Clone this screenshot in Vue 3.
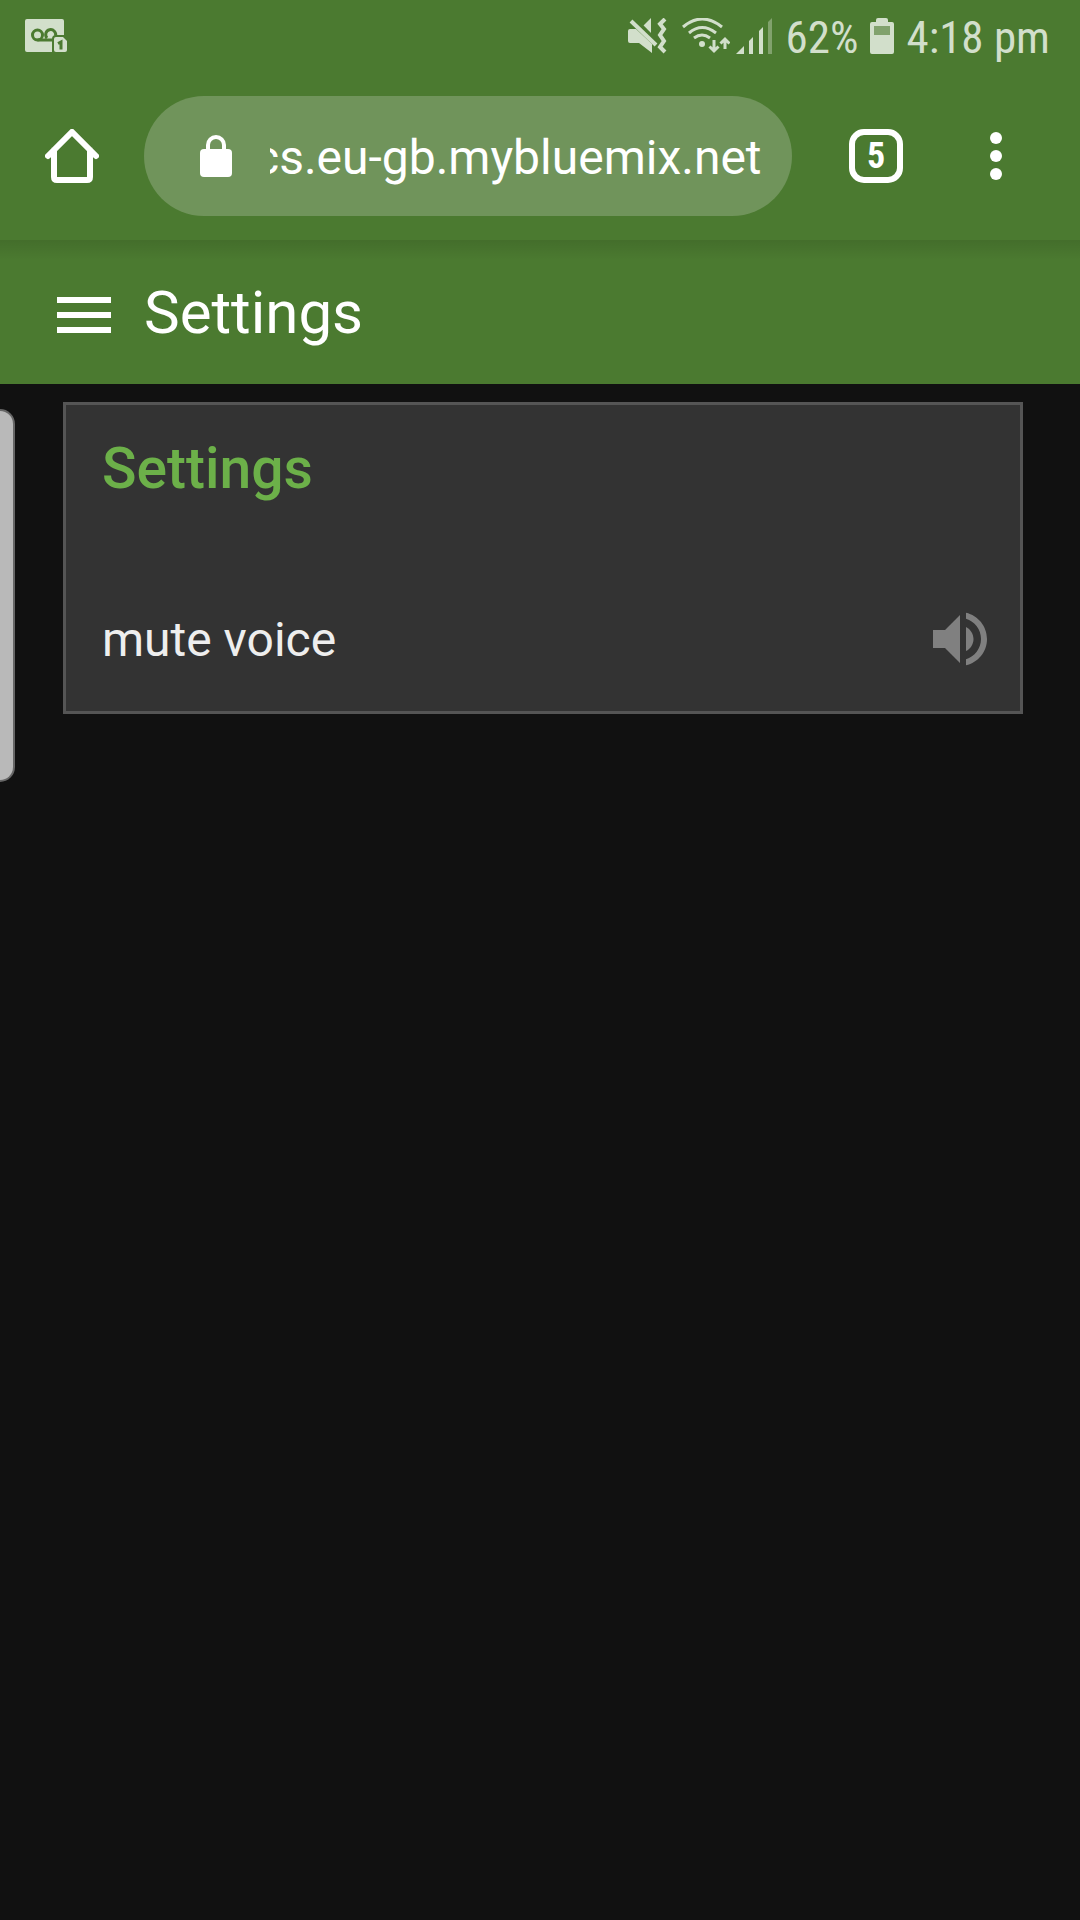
<script setup>
import { onMounted, ref } from 'vue'

const url = ref('cs.eu-gb.mybluemix.net')
const address = ref(null)
const openTabs = ref(5)
const muted = ref(false)

onMounted(() => {
  // keep the end of the host name in view
  address.value.scrollLeft = address.value.scrollWidth
})
</script>

<template>
  <div class="screen">
    <div class="status-bar">
      <svg class="voicemail" width="42" height="34" viewBox="0 0 42 34" aria-hidden="true">
        <path class="fill" d="M2 0H37Q39 0 39 2V16H31Q27 16 27 20V33H2Q0 33 0 31V2Q0 0 2 0Z" />
        <g class="cut">
          <circle cx="12.5" cy="16" r="5" />
          <path d="M12.5 21H27M22 19A5 5 0 1 1 30.5 17" />
        </g>
        <path class="fill" d="M29 20Q29 18 31 18H38L42 22V31Q42 33 40 33H31Q29 33 29 31Z" />
        <path class="one" d="M33 24.5L36 23V30.5" />
      </svg>
      <div class="status-right">
        <svg class="sound-off" width="40" height="36" viewBox="0 0 40 36" aria-hidden="true">
          <path class="fill" d="M2 11H8L24 26V35L11 25H2Q0 25 0 23V13Q0 11 2 11ZM15 8L23 0V17Z" />
          <path class="slash-gap" d="M6 0L31 25" />
          <path class="line thick" d="M3 3L28 27" />
          <path class="line thick" d="M37 1L32 6L36 11L32 17L36 23L32 29L37 34" />
        </svg>
        <svg class="wifi" width="48" height="36" viewBox="0 0 48 36" aria-hidden="true">
          <path class="line" d="M1 9Q20 -7 40 9M7 15Q20 4 34 15M12 20Q20 14 28 20" />
          <circle class="fill" cx="20" cy="26" r="3" />
          <path class="line" d="M32 22V33M27.5 28.5L32 33L36.5 28.5M43 31V21M38.5 25.5L43 21L47.5 25.5" />
        </svg>
        <svg class="signal" width="36" height="36" viewBox="0 0 36 36" aria-hidden="true">
          <path class="fill" d="M0 36L8 28V36ZM13 23L17 19V36H13ZM23 13L27 9V36H23Z" />
          <path class="fill dim" d="M32 4L36 0V36H32Z" />
        </svg>
        <span>62%</span>
        <svg class="battery" width="24" height="36" viewBox="0 0 24 36" aria-hidden="true">
          <path class="fill" fill-rule="evenodd" d="M6 4V2Q6 0 8 0H16Q18 0 18 2V4H22Q24 4 24 6V34Q24 36 22 36H2Q0 36 0 34V6Q0 4 2 4ZM4 8V17H20V8Z" />
          <path class="fill dim" d="M4 8H20V17H4Z" />
        </svg>
        <span>4:18 pm</span>
      </div>
    </div>

    <div class="browser-bar">
      <button class="home" type="button" aria-label="Home">
        <svg width="54" height="54" viewBox="0 0 54 54">
          <path d="M3 27L27 3L51 27M9 21V48Q9 51 12 51H42Q45 51 45 48V21" fill="none" stroke="#fff" stroke-width="6" stroke-linecap="round" />
        </svg>
      </button>
      <label class="address">
        <svg width="32" height="42" viewBox="0 0 32 42" aria-label="Secure">
          <path d="M8 16V10A8 8 0 0 1 24 10V16" fill="none" stroke="#fff" stroke-width="4" />
          <rect y="14" width="32" height="28" rx="4" fill="#fff" />
        </svg>
        <input ref="address" v-model="url" type="text" aria-label="Address" spellcheck="false">
      </label>
      <button class="tool" type="button" aria-label="Open tabs">
        <span class="tab-count">{{ openTabs }}</span>
      </button>
      <button class="tool" type="button" aria-label="More options">
        <svg width="12" height="48" viewBox="0 0 12 48" fill="#fff">
          <circle cx="6" cy="6" r="6" />
          <circle cx="6" cy="24" r="6" />
          <circle cx="6" cy="42" r="6" />
        </svg>
      </button>
    </div>

    <header class="app-header">
      <button type="button" aria-label="Menu">
        <svg width="72" height="72" viewBox="0 0 72 72">
          <path d="M9 21H63V27H9ZM9 36H63V42H9ZM9 51H63V57H9Z" fill="#fff" />
        </svg>
      </button>
      <h1>Settings</h1>
    </header>

    <main>
      <section class="card">
        <h2>Settings</h2>
        <div class="row">
          <span id="mute-label">mute voice</span>
          <button type="button" aria-labelledby="mute-label" :aria-pressed="muted" @click="muted = !muted">
            <svg width="72" height="72" viewBox="0 0 24 24" fill="#808080">
              <path d="M3 9v6h4l5 5V4L7 9H3zm13.5 3c0-1.77-1.02-3.29-2.5-4.03v8.05c1.48-.73 2.5-2.25 2.5-4.02zM14 3.23v2.06c2.89.86 5 3.54 5 6.71s-2.11 5.85-5 6.71v2.06c4.01-.91 7-4.49 7-8.77s-2.99-7.86-7-8.77z" />
            </svg>
          </button>
        </div>
      </section>
    </main>

    <div class="edge-handle"></div>
  </div>
</template>

<style>
body {
  background: #111;
}
</style>

<style scoped>
.screen {
  position: relative;
  min-height: 100vh;
  background: #111;
  color: #fff;
  font-family: Roboto, sans-serif;
}

button {
  display: flex;
  align-items: center;
  justify-content: center;
  padding: 0;
  border: 0;
  background: none;
  color: inherit;
  font: inherit;
}

svg {
  display: block;
  flex: none;
}

.status-bar {
  display: flex;
  align-items: center;
  justify-content: space-between;
  height: 72px;
  padding: 0 30px 0 25px;
  background: #4b7a30;
  color: #d2dfcb;
}

.status-right {
  display: flex;
  align-items: center;
  font-family: "Roboto Condensed", Roboto, sans-serif;
  font-size: 45px;
  line-height: 68px;
  white-space: nowrap;
}

.status-right span {
  padding-top: 4px;
}

.fill {
  fill: #d2dfcb;
}

.dim {
  opacity: 0.4;
}

.line {
  fill: none;
  stroke: #d2dfcb;
  stroke-width: 3;
}

.thick {
  stroke-width: 4;
}

.cut,
.one,
.slash-gap {
  fill: none;
  stroke: #4b7a30;
  stroke-width: 3;
}

.sound-off,
.signal {
  margin-right: 14px;
}

.wifi {
  margin-right: 6px;
}

.battery {
  margin: 0 12px;
}

.browser-bar {
  display: flex;
  align-items: center;
  height: 168px;
  padding-right: 24px;
  background: #4b7a30;
}

.home {
  width: 144px;
  height: 144px;
}

.address {
  display: flex;
  flex: 1;
  align-items: center;
  gap: 38px;
  min-width: 0;
  height: 120px;
  margin-right: 24px;
  padding: 0 30px 0 56px;
  box-sizing: border-box;
  border-radius: 60px;
  background: #70945b;
}

.address input {
  flex: 1;
  min-width: 0;
  height: 72px;
  padding: 2px 0 0;
  border: 0;
  outline: 0;
  background: none;
  color: #fff;
  font: 48px Roboto, sans-serif;
}

.tool {
  width: 120px;
  height: 120px;
}

.tab-count {
  width: 54px;
  height: 54px;
  box-sizing: border-box;
  border: 6px solid #fff;
  border-radius: 15px;
  font-family: "Roboto Condensed", Roboto, sans-serif;
  font-size: 36px;
  font-weight: 700;
  line-height: 42px;
  text-align: center;
}

.app-header {
  display: flex;
  align-items: center;
  gap: 24px;
  height: 144px;
  padding-left: 48px;
  background: linear-gradient(rgba(0, 0, 0, 0.1), transparent 20px) #4b7a30;
}

h1 {
  margin: 0;
  padding-top: 2px;
  font-size: 60px;
  font-weight: 400;
  line-height: 72px;
}

main {
  padding: 18px 57px 18px 63px;
}

.card {
  padding: 36px 24px 0 36px;
  border: 3px solid #555;
  background: #333;
}

h2 {
  margin: 0 0 70px;
  color: #6cb049;
  font-size: 57px;
  font-weight: 500;
  line-height: 56px;
}

.row {
  display: flex;
  align-items: center;
  justify-content: space-between;
  height: 144px;
  color: #eee;
  font-size: 48px;
}

.edge-handle {
  position: absolute;
  top: 409px;
  left: 0;
  width: 15px;
  height: 373px;
  box-sizing: border-box;
  border: 2px solid #666;
  border-left: 0;
  border-radius: 0 15px 15px 0;
  background: #b9b9b9;
}
</style>
